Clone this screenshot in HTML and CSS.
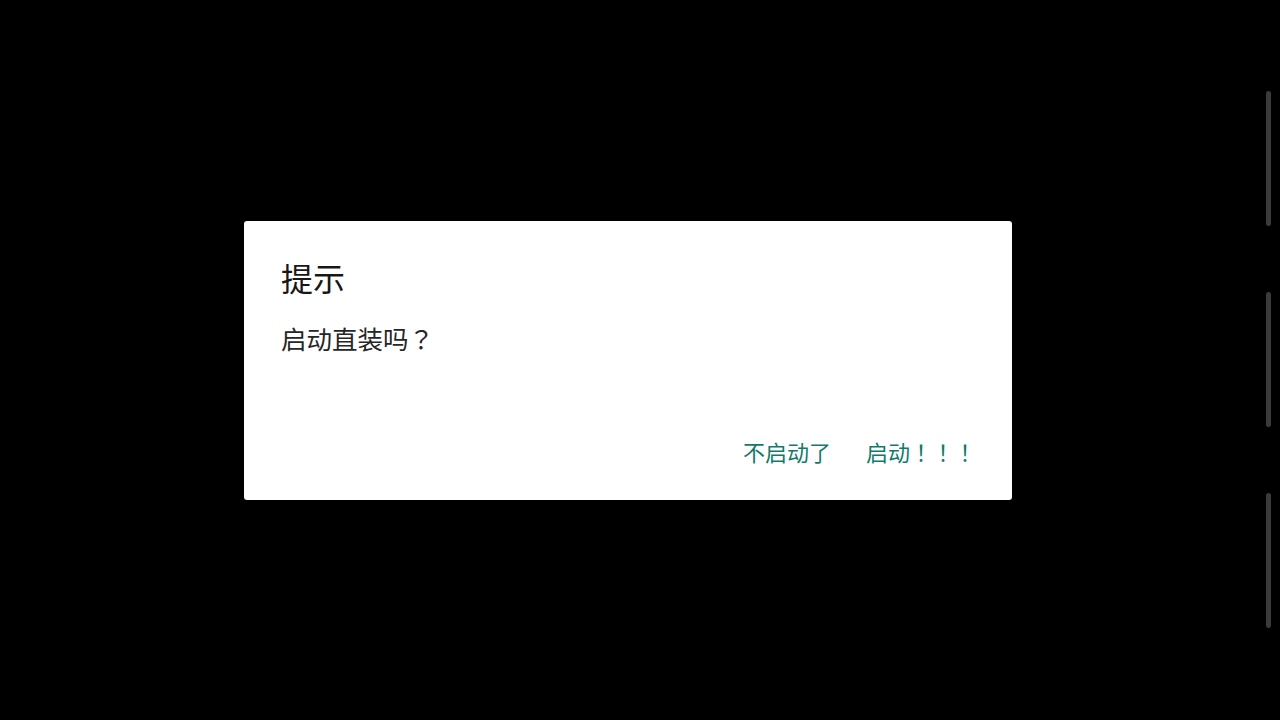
FILE: index.html
```html
<!DOCTYPE html>
<html lang="zh-CN">
<head>
<meta charset="utf-8">
<title>提示</title>
<link rel="stylesheet" href="styles.css">
</head>
<body>
<div class="screen">
  <main class="stage">
    <div class="dialog" role="dialog">
      <h1 class="dialog-title">提示</h1>
      <p class="dialog-message">启动直装吗<span class="punct" lang="zh-TW">？</span></p>
      <div class="dialog-actions">
        <button class="btn">不启动了</button>
        <button class="btn">启动<span class="punct" lang="zh-TW">！！！</span></button>
      </div>
    </div>
  </main>
  <aside class="rail">
    <span class="rail-bar"></span>
    <span class="rail-bar"></span>
    <span class="rail-bar"></span>
  </aside>
</div>
</body>
</html>
```

FILE: styles.css
```css
html, body {
  margin: 0;
  padding: 0;
  background: #000;
  width: 1280px;
  height: 720px;
  overflow: hidden;
  font-family: "Noto Sans CJK SC", "Noto Sans", sans-serif;
}

.screen {
  display: flex;
  width: 1280px;
  height: 720px;
}

.stage {
  flex: 1;
  display: flex;
  align-items: center;
  justify-content: center;
}

.dialog {
  width: 768px;
  box-sizing: border-box;
  background: #fff;
  border-radius: 3px;
  padding: 40px 36px 38px 37px;
  display: flex;
  flex-direction: column;
}

.dialog-title {
  margin: 0;
  font-size: 32px;
  line-height: 32px;
  font-weight: 400;
  color: #171717;
}

.dialog-message {
  margin: 32px 0 0;
  font-size: 25.5px;
  line-height: 26px;
  color: #262626;
}

.punct {
  font-family: "Noto Sans CJK TC", "Noto Sans CJK JP", sans-serif;
}

.dialog-actions {
  margin-top: 89px;
  display: flex;
  justify-content: flex-end;
  gap: 35px;
}

.btn {
  border: 0;
  background: none;
  padding: 0;
  margin: 0;
  font-family: inherit;
  font-size: 22px;
  line-height: 22px;
  color: #127a6b;
  cursor: pointer;
}

.rail {
  width: 24px;
  box-sizing: border-box;
  padding: 91px 0 0 10px;
  display: flex;
  flex-direction: column;
  gap: 66px;
}

.rail-bar {
  display: block;
  width: 5px;
  height: 135px;
  border-radius: 3px;
  background: #3b3b3b;
}
```
